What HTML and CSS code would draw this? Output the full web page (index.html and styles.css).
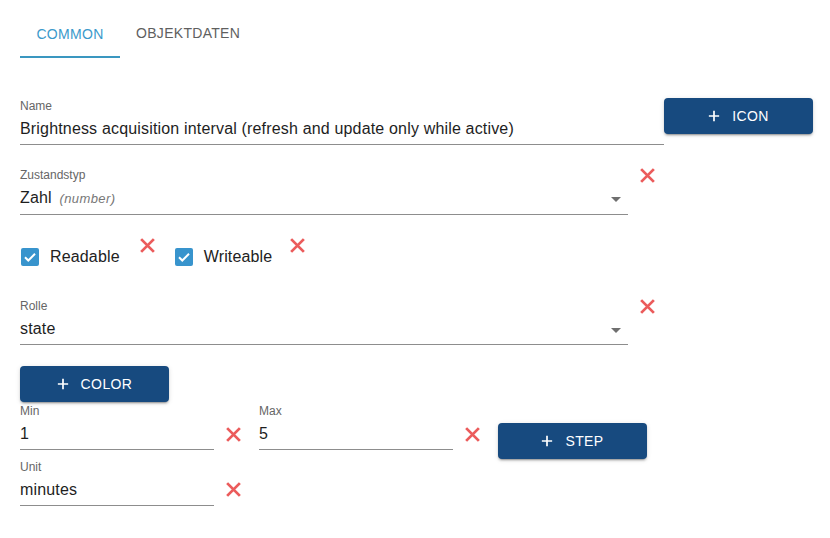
FILE: index.html
```html
<!DOCTYPE html>
<html>
<head>
<meta charset="utf-8">
<link rel="stylesheet" href="styles.css">
</head>
<body>
<div class="page">
  <div class="tabs">
    <div class="tab active">COMMON</div>
    <div class="tab">OBJEKTDATEN</div>
  </div>

  <div class="row row-name">
    <div class="field w-name">
      <div class="label">Name</div>
      <div class="value">Brightness acquisition interval (refresh and update only while active)</div>
    </div>
    <button class="btn btn-icon"><svg class="plus" viewBox="0 0 14 14"><path d="M7 1v12M1 7h12"/></svg>ICON</button>
  </div>

  <div class="row row-type">
    <div class="field w-wide">
      <div class="label">Zustandstyp</div>
      <div class="value select"><span>Zahl <i class="hint">(number)</i></span><svg class="arrow" viewBox="0 0 10 5"><path d="M0 0h10L5 5z"/></svg></div>
    </div>
    <svg class="x x-top" viewBox="0 0 16 16"><path d="M2 2l12 12M14 2L2 14"/></svg>
  </div>

  <div class="row row-checks">
    <label class="check"><span class="box"><svg viewBox="0 0 18 18"><path d="M4 9.2l3.3 3.3L14 5.8"/></svg></span>Readable</label>
    <svg class="x x-check" viewBox="0 0 16 16"><path d="M2 2l12 12M14 2L2 14"/></svg>
    <label class="check check-2"><span class="box"><svg viewBox="0 0 18 18"><path d="M4 9.2l3.3 3.3L14 5.8"/></svg></span>Writeable</label>
    <svg class="x x-check" viewBox="0 0 16 16"><path d="M2 2l12 12M14 2L2 14"/></svg>
  </div>

  <div class="row row-role">
    <div class="field w-wide">
      <div class="label">Rolle</div>
      <div class="value select"><span>state</span><svg class="arrow" viewBox="0 0 10 5"><path d="M0 0h10L5 5z"/></svg></div>
    </div>
    <svg class="x x-top" viewBox="0 0 16 16"><path d="M2 2l12 12M14 2L2 14"/></svg>
  </div>

  <button class="btn btn-color"><svg class="plus" viewBox="0 0 14 14"><path d="M7 1v12M1 7h12"/></svg>COLOR</button>

  <div class="row row-min">
    <div class="field w-small">
      <div class="label">Min</div>
      <div class="value">1</div>
    </div>
    <svg class="x x-mid" viewBox="0 0 16 16"><path d="M2 2l12 12M14 2L2 14"/></svg>
    <div class="field w-small f-max">
      <div class="label">Max</div>
      <div class="value">5</div>
    </div>
    <svg class="x x-mid" viewBox="0 0 16 16"><path d="M2 2l12 12M14 2L2 14"/></svg>
    <button class="btn btn-step"><svg class="plus" viewBox="0 0 14 14"><path d="M7 1v12M1 7h12"/></svg>STEP</button>
  </div>

  <div class="row row-unit">
    <div class="field w-small">
      <div class="label">Unit</div>
      <div class="value">minutes</div>
    </div>
    <svg class="x x-unit" viewBox="0 0 16 16"><path d="M2 2l12 12M14 2L2 14"/></svg>
  </div>
</div>
</body>
</html>
```

FILE: styles.css
```css
* { box-sizing: border-box; }
html, body {
  margin: 0;
  padding: 0;
  background: #ffffff;
  font-family: "Liberation Sans", Arial, sans-serif;
  color: #222222;
}
.page {
  padding: 10px 20px 0 20px;
  width: 830px;
  height: 538px;
}
.tabs {
  display: flex;
  height: 48px;
}
.tab {
  height: 48px;
  display: flex;
  align-items: center;
  justify-content: center;
  font-size: 14px;
  letter-spacing: 0.3px;
  color: #5f5f5f;
  padding: 0 16px;
}
.tab.active {
  width: 100px;
  color: #3b9acb;
  border-bottom: 2px solid #3a97c0;
  padding-top: 2px;
}
.tab:not(.active) {
  padding-bottom: 2px;
}
.row {
  display: flex;
  align-items: flex-start;
}
.row > * { flex: none; }
.row-name { margin-top: 40px; }
.row-type { margin-top: 22px; }
.row-checks { margin-top: 22px; height: 40px; }
.row-role { margin-top: 21px; }
.btn-color { margin-top: 21px; }
.row-min { margin-top: 1px; }
.row-unit { margin-top: 0; }

.field {
  display: flex;
  flex-direction: column;
  border-bottom: 1px solid #8d8d8d;
}
.w-name { width: 644px; }
.w-wide { width: 608px; }
.w-small { width: 194px; }
.f-max { margin-left: 17px; }
.label {
  font-size: 12px;
  line-height: 14px;
  color: #666666;
  margin-top: 1px;
  margin-bottom: -1px;
}
.value {
  font-size: 16px;
  line-height: 24px;
  margin-top: 5px;
  padding-bottom: 3px;
  color: #1e1e1e;
  white-space: nowrap;
  letter-spacing: 0.17px;
}
.select {
  display: flex;
  justify-content: space-between;
  align-items: center;
}
.hint {
  font-size: 13px;
  color: #777777;
  margin-left: 3px;
  letter-spacing: 0.4px;
}
.arrow {
  width: 10px;
  height: 5px;
  fill: #6f6f6f;
  margin-right: 7px;
  margin-top: 2px;
}
.x {
  width: 17px;
  height: 17px;
  stroke: #eb5c5c;
  stroke-width: 2.6;
  fill: none;
}
.x-top { margin-left: 11px; margin-top: 0; }
.x-check { margin-top: 0; }
.x-mid { margin-left: 11px; margin-top: 23px; }
.x-unit { margin-left: 11px; margin-top: 22px; }

.check {
  display: flex;
  align-items: center;
  height: 40px;
  font-size: 16px;
  letter-spacing: 0.15px;
  color: #222222;
  margin-left: 1px;
  margin-right: 19px;
}
.check-2 { margin-left: 19px; margin-right: 17px; }
.box {
  width: 18px;
  height: 18px;
  border-radius: 2px;
  background: #3894cd;
  margin-right: 11px;
  display: flex;
}
.box svg {
  width: 18px;
  height: 18px;
  fill: none;
  stroke: #ffffff;
  stroke-width: 2;
}

.btn {
  width: 149px;
  height: 36px;
  border: none;
  border-radius: 4px;
  background: #174a7f;
  color: #ffffff;
  font-family: "Liberation Sans", Arial, sans-serif;
  font-size: 14px;
  letter-spacing: 0.4px;
  display: flex;
  align-items: center;
  justify-content: center;
  padding: 0;
  box-shadow: 0 3px 1px -2px rgba(0,0,0,0.2), 0 2px 2px 0 rgba(0,0,0,0.14), 0 1px 5px 0 rgba(0,0,0,0.12);
}
.btn-icon { margin-left: 0; }
.btn-step { margin-left: 17px; margin-top: 20px; }
.plus {
  width: 12px;
  height: 12px;
  stroke: #ffffff;
  stroke-width: 2;
  fill: none;
  margin-right: 12px;
}
```
